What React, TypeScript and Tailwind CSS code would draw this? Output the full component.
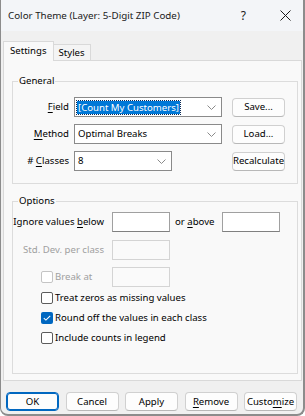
import React from 'react';

// Underlined access key letter
function Key({ children }: { children: React.ReactNode }) {
  return <span className="underline decoration-1 underline-offset-[2px]">{children}</span>;
}

function Chevron({ color = '#8a8a8a' }: { color?: string }) {
  return (
    <svg width="9" height="5" viewBox="0 0 9 5" fill="none">
      <path d="M0.5 0.5 L4.5 4.5 L8.5 0.5" stroke={color} strokeWidth="1" />
    </svg>
  );
}

interface ComboProps {
  value: string;
  width: string;
  selected?: boolean;
}

function Combo({ value, width, selected = false }: ComboProps) {
  return (
    <div className={`flex h-[20px] items-center border border-[#8a8a8a] bg-white pl-[2px] pr-[5px] ${width}`}>
      <div className="flex flex-1 items-center">
        {selected ? (
          <span className="bg-[#0078d7] px-[1px] leading-[13px] text-white outline-1 outline-dotted outline-[#0a2a55]">
            {value}
          </span>
        ) : (
          <span className="pl-[1px]">{value}</span>
        )}
      </div>
      <Chevron />
    </div>
  );
}

function Button({ children, primary = false, className = '' }: { children: React.ReactNode; primary?: boolean; className?: string }) {
  return (
    <div
      className={`flex h-[19px] items-center justify-center rounded-[4px] border bg-[#fdfdfd] ${
        primary ? 'border-[#0067c0] shadow-[inset_0_0_0_1px_#0067c0]' : 'border-[#d0d0d0] border-b-[#b8b8b8]'
      } ${className}`}
    >
      {children}
    </div>
  );
}

function TextBox({ disabled = false }: { disabled?: boolean }) {
  return (
    <div
      className={`h-[20px] w-[58px] border ${
        disabled ? 'border-[#d4d4d4] bg-[#fafafa]' : 'border-[#a0a0a0] border-b-[#808080] bg-white'
      }`}
    />
  );
}

function CheckBox({ checked = false, disabled = false }: { checked?: boolean; disabled?: boolean }) {
  if (checked) {
    return (
      <div className="flex h-[12px] w-[12px] items-center justify-center rounded-[2px] bg-[#0067c0]">
        <svg width="8" height="6" viewBox="0 0 8 6" fill="none">
          <path d="M0.8 3.2 L2.9 5.1 L7.2 0.8" stroke="white" strokeWidth="1.1" />
        </svg>
      </div>
    );
  }
  return (
    <div
      className={`h-[12px] w-[12px] rounded-[2px] border bg-white ${
        disabled ? 'border-[#c4c4c4]' : 'border-[#5c5c5c]'
      }`}
    />
  );
}

export default function App() {
  return (
    <div className="h-[416px] w-[305px] overflow-hidden bg-white">
      <div className="flex h-[416px] w-[305px] flex-col overflow-hidden rounded-b-[8px] border-b-2 border-l border-r-2 border-[#8c8c8c] bg-[#f0f0f0] font-['Noto_Sans',sans-serif] text-[9.6px] leading-[16px] text-[#000]">
        {/* Title bar */}
        <div className="flex h-[31px] items-center bg-[#f3f5f8] pl-[7px] pr-[12px]">
          <span className="flex-1 text-[9.8px] text-[#1a1a1a]">Color Theme (Layer: 5-Digit ZIP Code)</span>
          <span className="mr-[34px] text-[12px] text-[#1a1a1a]">?</span>
          <svg width="11" height="11" viewBox="0 0 11 11" fill="none">
            <path d="M0.5 0.5 L10.5 10.5 M10.5 0.5 L0.5 10.5" stroke="#1a1a1a" strokeWidth="1" />
          </svg>
        </div>

        {/* Tabs */}
        <div className="flex items-end pl-[2px] pt-[10px]">
          <div className="relative z-10 -mb-px flex h-[20px] items-center border border-b-0 border-[#d9d9d9] bg-[#f9f9f9] px-[6px] pb-[2px]">
            Settings
          </div>
          <div className="flex h-[16px] items-center border-r border-t border-[#d9d9d9] bg-[#f4f4f4] px-[5px]">
            Styles
          </div>
        </div>

        {/* Tab panel */}
        <div className="ml-[2px] mr-px flex h-[321px] flex-col border border-[#d9d9d9] bg-[#f9f9f9] pl-[8px] pr-[3px]">
          <fieldset className="mt-[12px] border border-[#dcdcdc] pb-[12px]">
            <legend className="ml-[5px] px-[1px]">General</legend>
            <div className="mt-[8px] grid grid-cols-[56px_148px_58px] items-center gap-x-[5px] gap-y-[7px]">
              <span className="text-right"><Key>F</Key>ield</span>
              <Combo value="[Count My Customers]" width="w-[148px]" selected />
              <Button className="ml-[5px]">Save...</Button>

              <span className="text-right"><Key>M</Key>ethod</span>
              <Combo value="Optimal Breaks" width="w-[148px]" />
              <Button className="ml-[5px]">Load...</Button>

              <span className="text-right"># <Key>C</Key>lasses</span>
              <Combo value="8" width="w-[98px]" />
              <Button className="ml-[5px]">Recalculate</Button>
            </div>
          </fieldset>

          <fieldset className="mt-[9px] border border-[#dcdcdc] pb-[25px]">
            <legend className="ml-[5px] px-[1px]">Options</legend>
            <div className="mt-[3px] flex flex-col">
              <div className="flex h-[20px] items-center">
                <span className="w-[91px] whitespace-nowrap text-right">Ignore values <Key>b</Key>elow</span>
                <div className="ml-[8px]"><TextBox /></div>
                <span className="ml-[5px] w-[47px] whitespace-nowrap">or <Key>a</Key>bove</span>
                <TextBox />
              </div>
              <div className="mt-[8px] flex h-[20px] items-center">
                <span className="w-[91px] whitespace-nowrap text-right text-[#a0a0a0]">Std. Dev. per class</span>
                <div className="ml-[8px]"><TextBox disabled /></div>
              </div>
              <div className="mt-[7px] flex h-[20px] items-center">
                <div className="ml-[28px] flex w-[63px] items-center gap-[2px] text-[#a0a0a0]">
                  <CheckBox disabled />
                  <span>Break at</span>
                </div>
                <div className="ml-[8px]"><TextBox disabled /></div>
              </div>
              <div className="mt-px flex flex-col pl-[28px]">
                <div className="flex h-[20px] items-center gap-[2px]">
                  <CheckBox />
                  <span>Treat zeros as missing values</span>
                </div>
                <div className="flex h-[20px] items-center gap-[2px]">
                  <CheckBox checked />
                  <span>Round off the values in each class</span>
                </div>
                <div className="flex h-[20px] items-center gap-[2px]">
                  <CheckBox />
                  <span>Include counts in legend</span>
                </div>
              </div>
            </div>
          </fieldset>
        </div>

        {/* Dialog buttons */}
        <div className="mt-[11px] flex justify-between pl-[5px] pr-[6px]">
          <Button primary className="w-[53px]">OK</Button>
          <Button className="w-[53px]">Cancel</Button>
          <Button className="w-[53px]">Apply</Button>
          <Button className="w-[53px]"><Key>R</Key>emove</Button>
          <Button className="w-[53px]">Custo<Key>m</Key>ize</Button>
        </div>
      </div>
    </div>
  );
}
